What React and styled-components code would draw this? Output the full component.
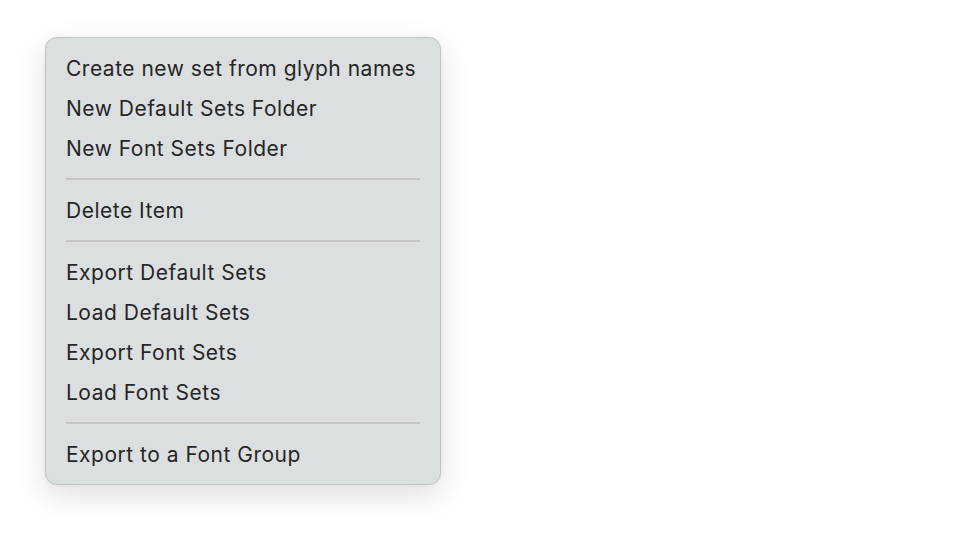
import React from "react";
import styled, { createGlobalStyle } from "styled-components";

const GlobalStyle = createGlobalStyle`
  html, body {
    margin: 0;
    background: #ffffff;
  }
`;

const items = [
  ["Create new set from glyph names", "New Default Sets Folder", "New Font Sets Folder"],
  ["Delete Item"],
  ["Export Default Sets", "Load Default Sets", "Export Font Sets", "Load Font Sets"],
  ["Export to a Font Group"],
];

function App() {
  return (
    <Page>
      <GlobalStyle />
      <Menu>
        {items.map((group, i) => (
          <React.Fragment key={i}>
            {i > 0 && <Separator />}
            {group.map((label) => (
              <MenuItem key={label}>{label}</MenuItem>
            ))}
          </React.Fragment>
        ))}
      </Menu>
    </Page>
  );
}

const Page = styled.div`
  width: 972px;
  height: 538px;
  padding: 37px 0 0 45px;
  box-sizing: border-box;
`;

const Menu = styled.div`
  width: 396px;
  box-sizing: border-box;
  padding: 10px 20px 10px;
  background: #dcdfe0;
  border: 1px solid #c2c4c6;
  border-radius: 12px;
  box-shadow: 0 10px 30px rgba(0, 0, 0, 0.13), 0 0 3px rgba(0, 0, 0, 0.07);
  display: flex;
  flex-direction: column;
`;

const MenuItem = styled.div`
  height: 40px;
  display: flex;
  align-items: center;
  font-family: Inter, "Liberation Sans", sans-serif;
  font-size: 21px;
  letter-spacing: 0.5px;
  color: #262626;
  white-space: nowrap;
`;

const Separator = styled.div`
  height: 2px;
  margin: 10px 0;
  background: #c3c5c7;
`;

export default App;
